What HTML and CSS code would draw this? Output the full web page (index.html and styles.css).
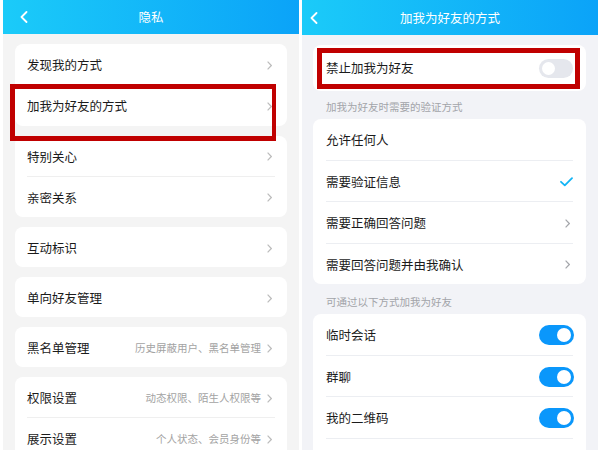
FILE: index.html
```html
<!DOCTYPE html>
<html lang="zh-CN">
<head>
  <meta charset="UTF-8" />
  <meta name="viewport" content="width=device-width, initial-scale=1.0"/>
  <title>隐私设置</title>
  <link rel="stylesheet" href="styles.css">
</head>
<body>

<div class="screens">

  <!-- Privacy screen -->
  <section class="panel panel-privacy">
    <header class="topbar">
      <svg class="back" width="8" height="12" viewBox="0 0 8 12"><polyline points="6.5,1 1.5,6 6.5,11" /></svg>
      <h1>隐私</h1>
    </header>

    <div class="card">
      <div class="row"><span class="label">发现我的方式</span><svg class="chev" width="5" height="9" viewBox="0 0 5 9"><polyline points="0.6,0.6 4.3,4.5 0.6,8.4" /></svg></div>
      <div class="row">
        <span class="label">加我为好友的方式</span><svg class="chev" width="5" height="9" viewBox="0 0 5 9"><polyline points="0.6,0.6 4.3,4.5 0.6,8.4" /></svg>
        <div class="mark mark-left"></div>
      </div>
    </div>

    <div class="card">
      <div class="row"><span class="label">特别关心</span><svg class="chev" width="5" height="9" viewBox="0 0 5 9"><polyline points="0.6,0.6 4.3,4.5 0.6,8.4" /></svg></div>
      <div class="row"><span class="label">亲密关系</span><svg class="chev" width="5" height="9" viewBox="0 0 5 9"><polyline points="0.6,0.6 4.3,4.5 0.6,8.4" /></svg></div>
    </div>

    <div class="card">
      <div class="row"><span class="label">互动标识</span><svg class="chev" width="5" height="9" viewBox="0 0 5 9"><polyline points="0.6,0.6 4.3,4.5 0.6,8.4" /></svg></div>
    </div>

    <div class="card">
      <div class="row"><span class="label">单向好友管理</span><svg class="chev" width="5" height="9" viewBox="0 0 5 9"><polyline points="0.6,0.6 4.3,4.5 0.6,8.4" /></svg></div>
    </div>

    <div class="card">
      <div class="row"><span class="label">黑名单管理</span><span class="hint">历史屏蔽用户、黑名单管理</span><svg class="chev" width="5" height="9" viewBox="0 0 5 9"><polyline points="0.6,0.6 4.3,4.5 0.6,8.4" /></svg></div>
    </div>

    <div class="card">
      <div class="row"><span class="label">权限设置</span><span class="hint">动态权限、陌生人权限等</span><svg class="chev" width="5" height="9" viewBox="0 0 5 9"><polyline points="0.6,0.6 4.3,4.5 0.6,8.4" /></svg></div>
      <div class="row"><span class="label">展示设置</span><span class="hint">个人状态、会员身份等</span><svg class="chev" width="5" height="9" viewBox="0 0 5 9"><polyline points="0.6,0.6 4.3,4.5 0.6,8.4" /></svg></div>
    </div>
  </section>

  <!-- Add-friend screen -->
  <section class="panel panel-friend">
    <header class="topbar">
      <svg class="back" width="8" height="12" viewBox="0 0 8 12"><polyline points="6.5,1 1.5,6 6.5,11" /></svg>
      <h1>加我为好友的方式</h1>
    </header>

    <div class="card card-first">
      <div class="row row-tall">
        <span class="label">禁止加我为好友</span>
        <span class="switch"></span>
        <div class="mark mark-right"></div>
      </div>
    </div>

    <p class="section-title section-first">加我为好友时需要的验证方式</p>
    <div class="card">
      <div class="row"><span class="label">允许任何人</span></div>
      <div class="row">
        <span class="label">需要验证信息</span>
        <svg class="check" width="13" height="10" viewBox="0 0 13 10"><polyline points="1,4.8 4.8,8.4 12,1.2" /></svg>
      </div>
      <div class="row"><span class="label">需要正确回答问题</span><svg class="chev" width="5" height="9" viewBox="0 0 5 9"><polyline points="0.6,0.6 4.3,4.5 0.6,8.4" /></svg></div>
      <div class="row"><span class="label">需要回答问题并由我确认</span><svg class="chev" width="5" height="9" viewBox="0 0 5 9"><polyline points="0.6,0.6 4.3,4.5 0.6,8.4" /></svg></div>
    </div>

    <p class="section-title">可通过以下方式加我为好友</p>
    <div class="card">
      <div class="row"><span class="label">临时会话</span><span class="switch on"></span></div>
      <div class="row"><span class="label">群聊</span><span class="switch on"></span></div>
      <div class="row"><span class="label">我的二维码</span><span class="switch on"></span></div>
      <div class="row row-last"><span class="switch on"></span></div>
    </div>
  </section>

</div>

</body>
</html>
```

FILE: styles.css
```css
* { margin: 0; padding: 0; box-sizing: border-box; }

body {
  font-family: "Noto Sans CJK SC", "Noto Sans", sans-serif;
  background: #fff;
  color: #1b1b1b;
  width: 600px;
  height: 450px;
  overflow: hidden;
}

.screens {
  display: flex;
  gap: 3px;
  padding-left: 3px;
  height: 450px;
}

.panel {
  width: 296px;
  height: 450px;
  overflow: hidden;
}

.panel-privacy { background: #f4f4f4; }
.panel-friend { background: #f2f3f7; }

/* Top bar */
.topbar {
  height: 34px;
  display: grid;
  grid-template-columns: 1fr auto 1fr;
  align-items: center;
  background: linear-gradient(90deg, #1bcbf9, #0ba3f8);
  color: #fff;
}

.panel-friend .topbar { height: 35px; }

.topbar h1 {
  font-size: 12.5px;
  font-weight: 400;
  line-height: 16px;
}

.back {
  fill: none;
  stroke: #fff;
  stroke-width: 1.8;
  stroke-linecap: round;
  stroke-linejoin: round;
  margin-left: 17px;
}

.panel-friend .back { margin-left: 8px; }

/* Cards and rows */
.card {
  background: #fff;
  border-radius: 8px;
  margin: 0 12px 10px;
  padding: 0 12px;
}

.panel-privacy .card:first-of-type { margin-top: 10px; }

.panel-friend .card {
  margin: 0 12px 0 11px;
  padding: 0 13px;
}

.panel-friend .card-first { margin-top: 10px; }

.row {
  position: relative;
  display: flex;
  align-items: center;
  height: 40px;
  padding-top: 2px;
}

.row + .row {
  height: 41.5px;
  border-top: 1px solid #efefef;
}

.panel-friend .row { height: 40.5px; }
.panel-friend .row + .row {
  height: 41.5px;
  border-top-color: #eceef2;
}

.panel-friend .row-tall { height: 46px; padding-top: 0; }

.row-last { justify-content: flex-end; }

.label {
  flex: 1;
  font-size: 12.5px;
  line-height: 16px;
}

.hint {
  font-size: 10.5px;
  line-height: 14px;
  color: #a3a3a3;
  margin-right: 6px;
}

.chev {
  fill: none;
  stroke: #bcbcbc;
  stroke-width: 1.2;
  margin-right: 3px;
}

.panel-friend .chev { stroke: #a4a6ab; }

.check {
  fill: none;
  stroke: #12b4f5;
  stroke-width: 1.8;
  stroke-linecap: round;
  stroke-linejoin: round;
}

.section-title {
  font-size: 10.5px;
  line-height: 14px;
  color: #a2a4a9;
  padding: 11px 24px 5px;
}

.section-first { padding-top: 9px; padding-bottom: 5px; }

/* Switches */
.switch {
  position: relative;
  width: 34px;
  height: 19px;
  border-radius: 10px;
  background: #e5e7ed;
}

.switch::after {
  content: "";
  position: absolute;
  top: 3px;
  left: 3px;
  width: 13px;
  height: 13px;
  border-radius: 50%;
  background: #fff;
}

.switch.on {
  width: 35px;
  height: 20px;
  background: #0a97fb;
  margin-right: -1px;
}

.switch.on::after {
  left: auto;
  right: 3px;
  width: 14px;
  height: 14px;
}

/* Red annotation boxes */
.mark {
  position: absolute;
  border: 5px solid #c00000;
  pointer-events: none;
}

.mark-left {
  top: -1px;
  bottom: -15px;
  left: -17px;
  right: -1px;
  border-width: 5px 4px 5px 5px;
}

.mark-right {
  top: 3px;
  bottom: 2px;
  left: -9px;
  right: -7px;
}
```
